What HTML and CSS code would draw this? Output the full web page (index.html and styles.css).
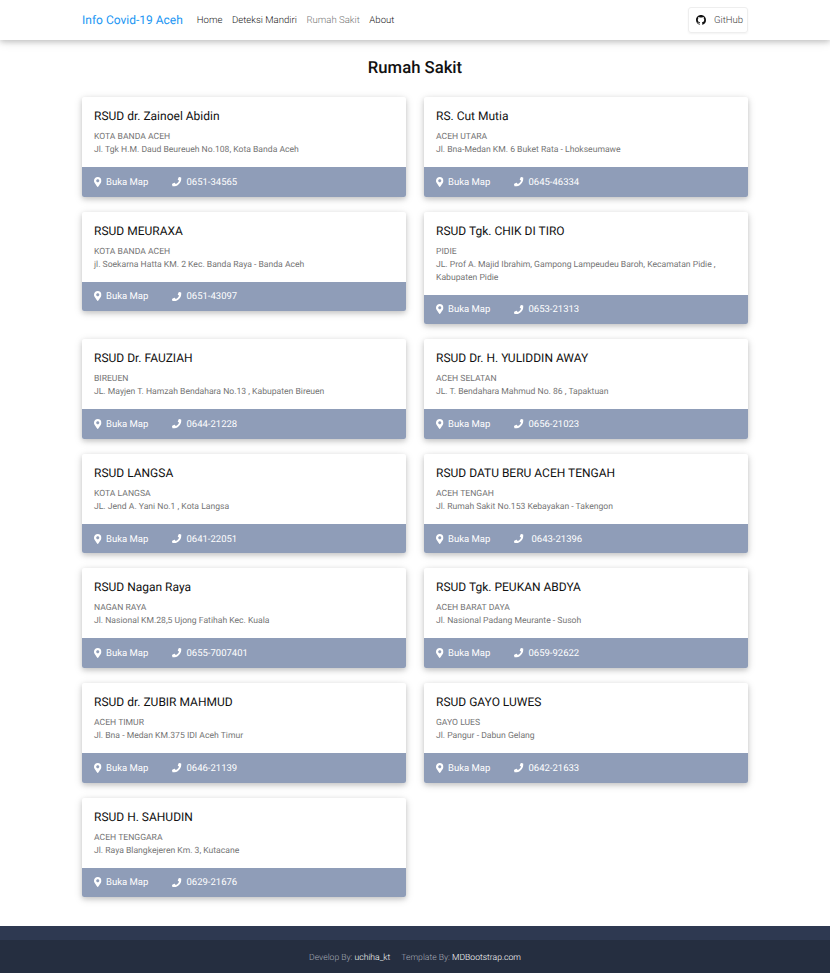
FILE: index.html
```html
<!DOCTYPE html>
<html lang="en">
<head>
    <meta charset="UTF-8">
    <meta name="viewport" content="width=device-width, initial-scale=1.0">
    <title>Rumah Sakit - Info Covid-19 Aceh</title>
    <link rel="stylesheet" href="styles.css">
</head>
<body>
    <svg class="icon-defs" aria-hidden="true">
        <symbol id="icon-marker" viewBox="0 0 384 512"><path d="M172.268 501.67C26.97 291.031 0 269.413 0 192 0 85.961 85.961 0 192 0s192 85.961 192 192c0 77.413-26.97 99.031-172.268 309.67-9.535 13.774-29.93 13.773-39.464 0zM192 272c44.183 0 80-35.817 80-80s-35.817-80-80-80-80 35.817-80 80 35.817 80 80 80z"/></symbol>
        <symbol id="icon-phone" viewBox="0 0 512 512"><path d="M493.4 24.6l-104-24c-11.3-2.6-22.9 3.3-27.5 13.9l-48 112c-4.2 9.8-1.4 21.3 6.9 28l60.6 49.6c-36 76.7-98.9 140.5-177.2 177.2l-49.6-60.6c-6.8-8.3-18.2-11.1-28-6.9l-112 48C3.9 366.5-2 378.1.6 389.4l24 104C27.1 504.2 36.7 512 48 512c256.1 0 464-207.5 464-464 0-11.2-7.7-20.9-18.6-23.4z"/></symbol>
        <symbol id="icon-github" viewBox="0 0 16 16"><path d="M8 0C3.58 0 0 3.58 0 8c0 3.54 2.29 6.53 5.47 7.59.4.07.55-.17.55-.38 0-.19-.01-.82-.01-1.49-2.01.37-2.53-.49-2.69-.94-.09-.23-.48-.94-.82-1.13-.28-.15-.68-.52-.01-.53.63-.01 1.08.58 1.23.82.72 1.21 1.87.87 2.33.66.07-.52.28-.87.51-1.07-1.78-.2-3.64-.89-3.64-3.95 0-.87.31-1.59.82-2.15-.08-.2-.36-1.02.08-2.12 0 0 .67-.21 2.2.82.64-.18 1.32-.27 2-.27.68 0 1.36.09 2 .27 1.53-1.04 2.2-.82 2.2-.82.44 1.1.16 1.92.08 2.12.51.56.82 1.27.82 2.15 0 3.07-1.87 3.75-3.65 3.95.29.25.54.73.54 1.48 0 1.07-.01 1.93-.01 2.2 0 .21.15.46.55.38A8.013 8.013 0 0016 8c0-4.42-3.58-8-8-8z"/></symbol>
    </svg>

    <nav class="navbar">
        <div class="navbar-inner">
            <a class="brand" href="#">Info Covid-19 Aceh</a>
            <ul class="nav-links">
                <li><a href="#">Home</a></li>
                <li><a href="#">Deteksi Mandiri</a></li>
                <li><a class="active" href="#">Rumah Sakit</a></li>
                <li><a href="#">About</a></li>
            </ul>
            <a class="github-btn" href="#"><svg class="icon-github"><use href="#icon-github"/></svg>GitHub</a>
        </div>
    </nav>

    <main class="container">
        <h1 class="page-title">Rumah Sakit</h1>
        <div class="card-grid">
            <div class="card">
                <div class="card-body">
                    <h2>RSUD dr. Zainoel Abidin</h2>
                    <p>KOTA BANDA ACEH<br>Jl. Tgk H.M. Daud Beureueh No.108, Kota Banda Aceh</p>
                </div>
                <div class="card-footer">
                    <a class="map-link" href="#"><svg class="icon-marker"><use href="#icon-marker"/></svg>Buka Map</a>
                    <span class="phone"><svg class="icon-phone"><use href="#icon-phone"/></svg>0651-34565</span>
                </div>
            </div>
            <div class="card">
                <div class="card-body">
                    <h2>RS. Cut Mutia</h2>
                    <p>ACEH UTARA<br>Jl. Bna-Medan KM. 6 Buket Rata - Lhokseumawe</p>
                </div>
                <div class="card-footer">
                    <a class="map-link" href="#"><svg class="icon-marker"><use href="#icon-marker"/></svg>Buka Map</a>
                    <span class="phone"><svg class="icon-phone"><use href="#icon-phone"/></svg>0645-46334</span>
                </div>
            </div>
            <div class="card">
                <div class="card-body">
                    <h2>RSUD MEURAXA</h2>
                    <p>KOTA BANDA ACEH<br>jl. Soekarna Hatta KM. 2 Kec. Banda Raya - Banda Aceh</p>
                </div>
                <div class="card-footer">
                    <a class="map-link" href="#"><svg class="icon-marker"><use href="#icon-marker"/></svg>Buka Map</a>
                    <span class="phone"><svg class="icon-phone"><use href="#icon-phone"/></svg>0651-43097</span>
                </div>
            </div>
            <div class="card">
                <div class="card-body">
                    <h2>RSUD Tgk. CHIK DI TIRO</h2>
                    <p>PIDIE<br>JL. Prof A. Majid Ibrahim, Gampong Lampeudeu Baroh, Kecamatan Pidie , Kabupaten Pidie</p>
                </div>
                <div class="card-footer">
                    <a class="map-link" href="#"><svg class="icon-marker"><use href="#icon-marker"/></svg>Buka Map</a>
                    <span class="phone"><svg class="icon-phone"><use href="#icon-phone"/></svg>0653-21313</span>
                </div>
            </div>
            <div class="card">
                <div class="card-body">
                    <h2>RSUD Dr. FAUZIAH</h2>
                    <p>BIREUEN<br>JL. Mayjen T. Hamzah Bendahara No.13 , Kabupaten Bireuen</p>
                </div>
                <div class="card-footer">
                    <a class="map-link" href="#"><svg class="icon-marker"><use href="#icon-marker"/></svg>Buka Map</a>
                    <span class="phone"><svg class="icon-phone"><use href="#icon-phone"/></svg>0644-21228</span>
                </div>
            </div>
            <div class="card">
                <div class="card-body">
                    <h2>RSUD Dr. H. YULIDDIN AWAY</h2>
                    <p>ACEH SELATAN<br>JL. T. Bendahara Mahmud No. 86 , Tapaktuan</p>
                </div>
                <div class="card-footer">
                    <a class="map-link" href="#"><svg class="icon-marker"><use href="#icon-marker"/></svg>Buka Map</a>
                    <span class="phone"><svg class="icon-phone"><use href="#icon-phone"/></svg>0656-21023</span>
                </div>
            </div>
            <div class="card">
                <div class="card-body">
                    <h2>RSUD LANGSA</h2>
                    <p>KOTA LANGSA<br>JL. Jend A. Yani No.1 , Kota Langsa</p>
                </div>
                <div class="card-footer">
                    <a class="map-link" href="#"><svg class="icon-marker"><use href="#icon-marker"/></svg>Buka Map</a>
                    <span class="phone"><svg class="icon-phone"><use href="#icon-phone"/></svg>0641-22051</span>
                </div>
            </div>
            <div class="card">
                <div class="card-body">
                    <h2>RSUD DATU BERU ACEH TENGAH</h2>
                    <p>ACEH TENGAH<br>Jl. Rumah Sakit No.153 Kebayakan - Takengon</p>
                </div>
                <div class="card-footer">
                    <a class="map-link" href="#"><svg class="icon-marker"><use href="#icon-marker"/></svg>Buka Map</a>
                    <span class="phone wide"><svg class="icon-phone"><use href="#icon-phone"/></svg>0643-21396</span>
                </div>
            </div>
            <div class="card">
                <div class="card-body">
                    <h2>RSUD Nagan Raya</h2>
                    <p>NAGAN RAYA<br>Jl. Nasional KM.28,5 Ujong Fatihah Kec. Kuala</p>
                </div>
                <div class="card-footer">
                    <a class="map-link" href="#"><svg class="icon-marker"><use href="#icon-marker"/></svg>Buka Map</a>
                    <span class="phone"><svg class="icon-phone"><use href="#icon-phone"/></svg>0655-7007401</span>
                </div>
            </div>
            <div class="card">
                <div class="card-body">
                    <h2>RSUD Tgk. PEUKAN ABDYA</h2>
                    <p>ACEH BARAT DAYA<br>Jl. Nasional Padang Meurante - Susoh</p>
                </div>
                <div class="card-footer">
                    <a class="map-link" href="#"><svg class="icon-marker"><use href="#icon-marker"/></svg>Buka Map</a>
                    <span class="phone"><svg class="icon-phone"><use href="#icon-phone"/></svg>0659-92622</span>
                </div>
            </div>
            <div class="card">
                <div class="card-body">
                    <h2>RSUD dr. ZUBIR MAHMUD</h2>
                    <p>ACEH TIMUR<br>Jl. Bna - Medan KM.375 IDI Aceh Timur</p>
                </div>
                <div class="card-footer">
                    <a class="map-link" href="#"><svg class="icon-marker"><use href="#icon-marker"/></svg>Buka Map</a>
                    <span class="phone"><svg class="icon-phone"><use href="#icon-phone"/></svg>0646-21139</span>
                </div>
            </div>
            <div class="card">
                <div class="card-body">
                    <h2>RSUD GAYO LUWES</h2>
                    <p>GAYO LUES<br>Jl. Pangur - Dabun Gelang</p>
                </div>
                <div class="card-footer">
                    <a class="map-link" href="#"><svg class="icon-marker"><use href="#icon-marker"/></svg>Buka Map</a>
                    <span class="phone"><svg class="icon-phone"><use href="#icon-phone"/></svg>0642-21633</span>
                </div>
            </div>
            <div class="card">
                <div class="card-body">
                    <h2>RSUD H. SAHUDIN</h2>
                    <p>ACEH TENGGARA<br>Jl. Raya Blangkejeren Km. 3, Kutacane</p>
                </div>
                <div class="card-footer">
                    <a class="map-link" href="#"><svg class="icon-marker"><use href="#icon-marker"/></svg>Buka Map</a>
                    <span class="phone"><svg class="icon-phone"><use href="#icon-phone"/></svg>0629-21676</span>
                </div>
            </div>
        </div>
    </main>

    <footer class="site-footer">
        <div class="footer-band"></div>
        <div class="footer-copy">
            <span>Develop By: <a href="#">uchiha_kt</a></span>
            <span>Template By: <a href="#">MDBootstrap.com</a></span>
        </div>
    </footer>
</body>
</html>
```

FILE: styles.css
```css
* {
    box-sizing: border-box;
}
body {
    font-family: Roboto, "Noto Sans", sans-serif;
    background-color: #ffffff;
    color: #212529;
    margin: 0;
    text-rendering: geometricPrecision;
}
a {
    color: inherit;
    text-decoration: none;
}
.icon-defs {
    display: none;
}

.navbar {
    height: 40px;
    background-color: #ffffff;
    box-shadow: 0 2px 5px 0 rgba(0, 0, 0, 0.16), 0 2px 10px 0 rgba(0, 0, 0, 0.12);
}
.navbar-inner {
    width: 666px;
    height: 100%;
    margin: 0 auto;
    display: flex;
    align-items: center;
}
.brand {
    color: #2196f3;
    font-size: 12px;
    margin-right: 14px;
}
.nav-links {
    list-style: none;
    margin: 0;
    padding: 0;
    display: flex;
    gap: 9.5px;
    font-size: 9.6px;
    font-weight: 300;
    color: #222222;
}
.nav-links .active {
    color: #777777;
}
.github-btn {
    margin-left: auto;
    width: 60px;
    height: 26px;
    border: 1px solid #eeeeee;
    border-radius: 3px;
    display: flex;
    align-items: center;
    padding-left: 7px;
    font-size: 9.6px;
    font-weight: 300;
    color: #444444;
    box-shadow: 0 1px 2px rgba(0, 0, 0, 0.05);
}
.icon-github {
    width: 10px;
    height: 10px;
    margin-right: 8px;
    fill: #111111;
}

.container {
    width: 666px;
    margin: 0 auto;
    padding-bottom: 28.8px;
}
.page-title {
    margin: 0;
    padding-top: 18px;
    height: 57px;
    text-align: center;
    font-size: 16.7px;
    line-height: 21px;
    font-weight: 500;
    color: #111111;
}
.card-grid {
    display: grid;
    grid-template-columns: 324px 324px;
    column-gap: 18px;
    row-gap: 15px;
    align-items: start;
}
.card {
    background-color: #ffffff;
    border-radius: 2px;
    overflow: hidden;
    box-shadow: 0 2px 5px 0 rgba(0, 0, 0, 0.16), 0 2px 10px 0 rgba(0, 0, 0, 0.12);
}
.card-body {
    padding: 12px 12px 10px;
}
.card-body h2 {
    margin: 0 0 7px;
    font-size: 12px;
    line-height: 15px;
    font-weight: 400;
    color: #111111;
}
.card-body p {
    margin: 0;
    font-size: 8.6px;
    line-height: 13px;
    font-weight: 400;
    color: #757575;
}
.card-footer {
    height: 29.6px;
    background-color: #8f9db8;
    color: #ffffff;
    padding: 1px 12px 0;
    display: flex;
    align-items: center;
    font-size: 9.5px;
}
.map-link {
    display: flex;
    align-items: center;
    width: 78px;
}
.phone {
    display: flex;
    align-items: center;
}
.icon-marker {
    width: 7.5px;
    height: 10px;
    margin-right: 4.5px;
    margin-top: -1px;
    fill: #ffffff;
}
.icon-phone {
    width: 9.5px;
    height: 9.5px;
    margin-right: 5px;
    margin-top: -1px;
    fill: #ffffff;
}
.phone.wide .icon-phone {
    margin-right: 8px;
}

.site-footer {
    height: 47px;
    background-color: #252e40;
}
.footer-band {
    height: 14px;
    background-color: #2e3951;
}
.footer-copy {
    height: 33px;
    padding-top: 3px;
    display: flex;
    justify-content: center;
    align-items: center;
    gap: 11px;
    font-size: 8.6px;
    font-weight: 300;
    color: #a5abb6;
}
.footer-copy a {
    color: #ffffff;
    font-weight: 300;
}
```
